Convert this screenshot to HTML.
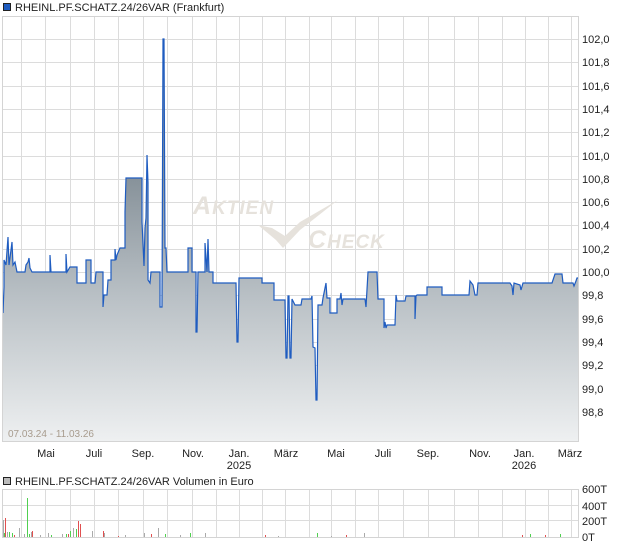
<!DOCTYPE html>
<html><head><meta charset="utf-8"><style>
html,body{margin:0;padding:0;background:#fff;}
body{width:620px;height:546px;overflow:hidden;font-family:"Liberation Sans",sans-serif;}
svg text{font-family:"Liberation Sans",sans-serif;}
</style></head><body>
<svg width="620" height="546" viewBox="0 0 620 546" xmlns="http://www.w3.org/2000/svg">
<defs>
<linearGradient id="g" gradientUnits="userSpaceOnUse" x1="0" y1="178" x2="0" y2="441">
<stop offset="0" stop-color="#87929a"/><stop offset="0.45" stop-color="#b9c0c5"/><stop offset="1" stop-color="#eef0f1"/>
</linearGradient>
</defs>
<rect x="3.5" y="3.5" width="7" height="7" fill="#1f5cc0" stroke="#222" stroke-width="1"/>
<text x="15" y="11" font-size="11" fill="#222">RHEINL.PF.SCHATZ.24/26VAR (Frankfurt)</text>
<g stroke="#dcdcdc" stroke-width="1">
<path d="M3 39.5H578M3 62.5H578M3 86.5H578M3 109.5H578M3 132.5H578M3 156.5H578M3 179.5H578M3 202.5H578M3 225.5H578M3 249.5H578M3 272.5H578M3 295.5H578M3 319.5H578M3 342.5H578M3 365.5H578M3 389.5H578M3 412.5H578"/>
<path d="M21.5 17V441M45.5 17V441M70.5 17V441M94.5 17V441M118.5 17V441M143.5 17V441M167.5 17V441M192.5 17V441M216.5 17V441M239.5 17V441M262.5 17V441M285.5 17V441M309.5 17V441M331.5 17V441M355.5 17V441M378.5 17V441M403.5 17V441M428.5 17V441M454.5 17V441M478.5 17V441M502.5 17V441M525.5 17V441M548.5 17V441M571.5 17V441"/>
</g>
<g fill="#e6e2dc" font-style="italic" font-weight="bold">
<text x="193" y="214" font-size="25" letter-spacing="1">A<tspan font-size="19">KTIEN</tspan></text>
<text x="308" y="248" font-size="25" letter-spacing="1">C<tspan font-size="19">HECK</tspan></text>
</g>
<path d="M258 225 L276 240 L283 248 L300 230 L338 200 L300 222 L285 236 L272 228 Z" fill="#e6e2dc"/>
<path fill="url(#g)" stroke="none" d="M3 441 L3 313 L4 287 L4 260 L6 265 L8 237 L9 265 L11 250 L12 242 L13 265 L15 262 L17 272 L25 272 L26 265 L28 262 L29 258 L30 268 L32 272 L50 272 L50 255 L51 272 L66 272 L66 254 L67 272 L70 267 L77 267 L77 283 L86 283 L86 260 L91 260 L91 283 L95 283 L96 272 L103 272 L103 307 L104 295 L107 295 L108 280 L111 280 L111 260 L115 260 L115 249 L116 260 L117 255 L120 248 L125 248 L125 212 L126 178 L142 178 L142 222 L144 266 L145 228 L146 218 L147 155 L148 183 L148 280 L150 283 L151 272 L160 272 L160 307 L162 307 L163 39 L164 39 L165 248 L166 248 L167 272 L188 272 L188 248 L192 248 L192 272 L196 272 L196 332 L197 332 L198 272 L205 272 L205 243 L207 272 L208 239 L209 272 L213 272 L213 283 L236 283 L237 342 L238 342 L239 278 L262 278 L262 283 L274 283 L274 300 L285 300 L286 358 L287 358 L288 296 L289 296 L290 358 L291 358 L292 299 L295 305 L301 305 L302 299 L311 299 L312 296 L313 347 L315 348 L316 400 L317 400 L318 305 L322 305 L323 298 L326 283 L327 298 L330 298 L330 313 L337 313 L337 299 L340 299 L341 293 L342 305 L343 299 L350 299 L365 299 L366 307 L368 272 L377 272 L378 299 L384 299 L384 328 L385 322 L386 328 L387 325 L395 325 L396 295 L397 301 L405 301 L406 296 L407 296 L415 296 L415 319 L416 296 L417 295 L427 295 L427 287 L442 287 L442 295 L469 295 L470 281 L473 285 L475 295 L477 295 L478 283 L510 283 L512 286 L513 295 L514 283 L520 285 L521 290 L523 283 L525 283 L552 283 L555 274 L562 274 L563 283 L573 283 L574 286 L576 281 L577 278 L578 278 L578 441 Z"/>
<path fill="none" stroke="#1f5cc0" stroke-width="1.2" d="M3 313 L4 287 L4 260 L6 265 L8 237 L9 265 L11 250 L12 242 L13 265 L15 262 L17 272 L25 272 L26 265 L28 262 L29 258 L30 268 L32 272 L50 272 L50 255 L51 272 L66 272 L66 254 L67 272 L70 267 L77 267 L77 283 L86 283 L86 260 L91 260 L91 283 L95 283 L96 272 L103 272 L103 307 L104 295 L107 295 L108 280 L111 280 L111 260 L115 260 L115 249 L116 260 L117 255 L120 248 L125 248 L125 212 L126 178 L142 178 L142 222 L144 266 L145 228 L146 218 L147 155 L148 183 L148 280 L150 283 L151 272 L160 272 L160 307 L162 307 L163 39 L164 39 L165 248 L166 248 L167 272 L188 272 L188 248 L192 248 L192 272 L196 272 L196 332 L197 332 L198 272 L205 272 L205 243 L207 272 L208 239 L209 272 L213 272 L213 283 L236 283 L237 342 L238 342 L239 278 L262 278 L262 283 L274 283 L274 300 L285 300 L286 358 L287 358 L288 296 L289 296 L290 358 L291 358 L292 299 L295 305 L301 305 L302 299 L311 299 L312 296 L313 347 L315 348 L316 400 L317 400 L318 305 L322 305 L323 298 L326 283 L327 298 L330 298 L330 313 L337 313 L337 299 L340 299 L341 293 L342 305 L343 299 L350 299 L365 299 L366 307 L368 272 L377 272 L378 299 L384 299 L384 328 L385 322 L386 328 L387 325 L395 325 L396 295 L397 301 L405 301 L406 296 L407 296 L415 296 L415 319 L416 296 L417 295 L427 295 L427 287 L442 287 L442 295 L469 295 L470 281 L473 285 L475 295 L477 295 L478 283 L510 283 L512 286 L513 295 L514 283 L520 285 L521 290 L523 283 L525 283 L552 283 L555 274 L562 274 L563 283 L573 283 L574 286 L576 281 L577 278 L578 278"/>
<rect x="2.5" y="16.5" width="576" height="425" fill="none" stroke="#d4d4d4"/>
<text x="8" y="437" font-size="10" fill="#a89c8e">07.03.24 - 11.03.26</text>
<g font-size="11" fill="#222">
<text x="582" y="43">102,0</text><text x="582" y="66">101,8</text><text x="582" y="90">101,6</text><text x="582" y="113">101,4</text><text x="582" y="136">101,2</text><text x="582" y="160">101,0</text><text x="582" y="183">100,8</text><text x="582" y="206">100,6</text><text x="582" y="229">100,4</text><text x="582" y="253">100,2</text><text x="582" y="276">100,0</text><text x="582" y="299">99,8</text><text x="582" y="323">99,6</text><text x="582" y="346">99,4</text><text x="582" y="369">99,2</text><text x="582" y="393">99,0</text><text x="582" y="416">98,8</text>
</g>
<g font-size="11" fill="#222" text-anchor="middle">
<text x="46" y="457">Mai</text><text x="94" y="457">Juli</text><text x="143" y="457">Sep.</text><text x="193" y="457">Nov.</text><text x="239" y="457">Jan.</text><text x="239" y="469">2025</text><text x="286" y="457">März</text><text x="336" y="457">Mai</text><text x="383" y="457">Juli</text><text x="428" y="457">Sep.</text><text x="480" y="457">Nov.</text><text x="524" y="457">Jan.</text><text x="524" y="469">2026</text><text x="570" y="457">März</text>
</g>
<rect x="3.5" y="477.5" width="7" height="7" fill="#bbb" stroke="#222"/>
<text x="15" y="485" font-size="11" fill="#222">RHEINL.PF.SCHATZ.24/26VAR Volumen in Euro</text>
<g stroke="#dcdcdc">
<path d="M3 505.5H578M3 520.5H578"/>
<path d="M21.5 489V537M45.5 489V537M70.5 489V537M94.5 489V537M118.5 489V537M143.5 489V537M167.5 489V537M192.5 489V537M216.5 489V537M239.5 489V537M262.5 489V537M285.5 489V537M309.5 489V537M331.5 489V537M355.5 489V537M378.5 489V537M403.5 489V537M428.5 489V537M454.5 489V537M478.5 489V537M502.5 489V537M525.5 489V537M548.5 489V537M571.5 489V537"/>
</g>
<g stroke-width="1">
<path stroke="#aaa" d="M3.5 537V520M7.5 537V532M19.5 537V528M24.5 537V534M31.5 537V532M40.5 537V535M48.5 537V533M62.5 537V534M73.5 537V528M78.5 537V530M92.5 537V531M104.5 537V533M125.5 537V535M144.5 537V533M158.5 537V528M180.5 537V535M205.5 537V533M238.5 537V537M278.5 537V536M301.5 537V537M331.5 537V536M364.5 537V533"/>
<path stroke="#e05050" d="M5.5 537V518M14.5 537V535M32.5 537V531M68.5 537V534M78.5 537V521M80.5 537V524M103.5 537V531M118.5 537V536M151.5 537V534M265.5 537V535M346.5 537V535M522.5 537V535M545.5 537V535"/>
<path stroke="#50d050" d="M4.5 537V533M9.5 537V532M12.5 537V533M27.5 537V498M29.5 537V534M51.5 537V535M66.5 537V534M70.5 537V531M76.5 537V529M165.5 537V534M190.5 537V533M317.5 537V533M530.5 537V534M560.5 537V534"/>
</g>
<rect x="2.5" y="489.5" width="576" height="48" fill="none" stroke="#d4d4d4"/>
<g font-size="11" fill="#222">
<text x="582" y="493">600T</text><text x="582" y="510">400T</text><text x="582" y="525">200T</text><text x="582" y="541">0T</text>
</g>
</svg>
</body></html>
